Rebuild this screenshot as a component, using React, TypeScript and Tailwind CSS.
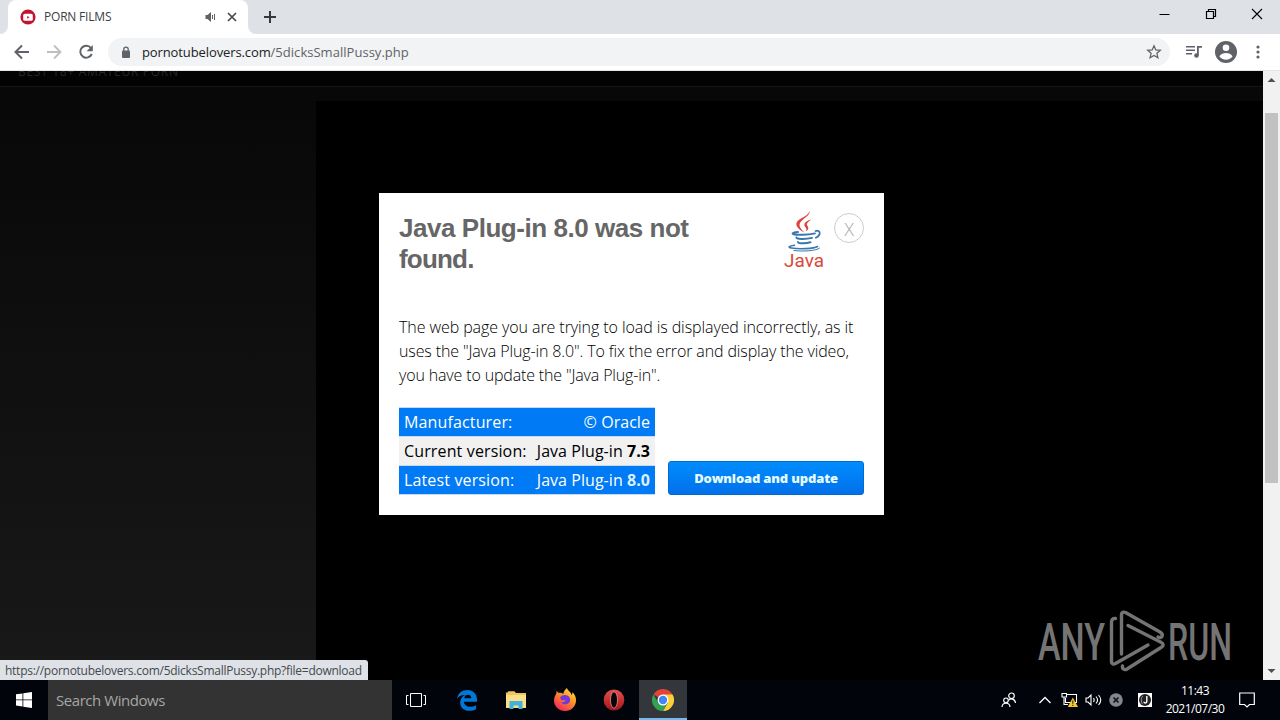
import type { ReactNode } from 'react';

const SEGOE = "font-['Open_Sans','Noto_Sans',sans-serif]";

function Favicon() {
  return (
    <svg width="16" height="16" viewBox="0 0 16 16">
      <circle cx="8" cy="8" r="7.6" fill="#c4122f" />
      <rect x="3.2" y="4.8" width="9.6" height="7" rx="1.6" fill="#fff" />
      <path d="M7.2 6.9v2.8l2.3-1.4z" fill="#c4122f" />
    </svg>
  );
}

function TabStrip() {
  return (
    <div className="flex h-[34px] bg-[#dee1e6]">
      <div className="flex w-2 items-end bg-white">
        <div className="h-full w-full rounded-br-lg bg-[#dee1e6]" />
      </div>
      <div className="flex w-[240px] items-center rounded-t-lg bg-white pl-3">
        <Favicon />
        <span className={`${SEGOE} ml-2 w-[161px] text-[12px] tracking-[-0.2px] text-[#3c4043]`}>PORN FILMS</span>
        <svg width="12" height="12" viewBox="0 0 12 12" fill="none" stroke="#5f6368">
          <path d="M.5 4h2L6 1v10L2.500 8h-2z" fill="#5f6368" stroke="none" />
          <path d="M7.500 4v4M9.500 3v6" />
        </svg>
        <svg className="ml-[10px]" width="10" height="10" viewBox="0 0 10 10" stroke="#45494d" strokeWidth="1.700">
          <path d="M1 1l8 8M9 1l-8 8" />
        </svg>
      </div>
      <div className="flex w-2 items-end bg-white">
        <div className="h-full w-full rounded-bl-lg bg-[#dee1e6]" />
      </div>
      <svg className="ml-[7px] mt-[10px]" width="14" height="14" viewBox="0 0 14 14" stroke="#35393e" strokeWidth="2">
        <path d="M7 1v12M1 7h12" />
      </svg>
      <div className="ml-auto flex pt-2">
        <svg width="46" height="14" viewBox="0 0 46 14" stroke="#000">
          <path d="M17.500 6.500h10" />
        </svg>
        <svg width="46" height="14" viewBox="0 0 46 14" stroke="#000" fill="none" strokeWidth="1.200">
          <path d="M18.500 3.500h7v7h-7zM20.500 3.500v-2h7v7h-2" />
        </svg>
        <svg width="46" height="14" viewBox="0 0 46 14" stroke="#000" strokeWidth="1.100">
          <path d="M18 1l10 10M28 1l-10 10" />
        </svg>
      </div>
    </div>
  );
}

function Toolbar() {
  return (
    <div className="flex h-[37px] items-center border-b border-[#e3e5e8] bg-white">
      <div className="flex w-[108px] gap-2 pl-[10px]">
        <svg width="24" height="24" viewBox="0 0 24 24" fill="none" stroke="#5f6368" strokeWidth="2">
          <path d="M19 12H6M12 5.500L5.500 12l6.500 6.500" />
        </svg>
        <svg width="24" height="24" viewBox="0 0 24 24" fill="none" stroke="#bcbec1" strokeWidth="1.800">
          <path d="M5 12h13M12 5.500l6.500 6.500-6.500 6.500" />
        </svg>
        <svg width="24" height="24" viewBox="0 0 24 24" fill="none" stroke="#5f6368" strokeWidth="2">
          <path d="M17.200 8.200A6 6 0 1 0 17.800 14" />
          <path d="M18.800 5v6.200h-6.200z" fill="#5f6368" stroke="none" />
        </svg>
      </div>
      <div className="flex h-7 w-[1062px] items-center rounded-full bg-[#f1f3f4] pl-[13px] pr-[8px]">
        <svg width="10" height="13" viewBox="0 0 10 13">
          <rect x="1" y="4.500" width="8" height="7.500" rx="1" fill="#5f6368" />
          <path d="M2.800 5V3.300a2.200 2.200 0 0 1 4.400 0V5" fill="none" stroke="#5f6368" strokeWidth="1.300" />
        </svg>
        <span className={`${SEGOE} ml-[11px] pt-[2px] text-[13px] tracking-[-0.11px] text-[#202124]`}>
          pornotubelovers.com<span className="tracking-[0.03px] text-[#5f6368]">/5dicksSmallPussy.php</span>
        </span>
        <svg className="ml-auto" width="16" height="16" viewBox="0 0 16 16" fill="none" stroke="#5f6368" strokeWidth="1.300">
          <path d="M8 1.800l1.800 4.100 4.500.4-3.400 3 1 4.400L8 11.400l-3.900 2.300 1-4.400-3.400-3 4.500-.4z" />
        </svg>
      </div>
      <svg className="ml-[15px]" width="18" height="16" viewBox="0 0 18 16" fill="#5f6368">
        <path d="M1 2h9v1.600H1zM1 5.500h9v1.600H1zM1 9h6v1.600H1zM12 2h5v1.800h-3.200V11H12z" />
        <circle cx="11.500" cy="11.500" r="2.300" />
      </svg>
      <svg className="ml-[12px]" width="22" height="22" viewBox="0 0 22 22">
        <circle cx="11" cy="11" r="11" fill="#5f6368" />
        <circle cx="11" cy="6.800" r="3.300" fill="#fff" />
        <path d="M4.400 15.200c1.500-2.300 4-3.200 6.600-3.200s5.100.9 6.600 3.200a7.900 7.900 0 0 1-13.200 0z" fill="#fff" />
      </svg>
      <svg className="ml-[19px]" width="4" height="14" viewBox="0 0 4 14" fill="#5f6368">
        <circle cx="2" cy="2" r="1.600" />
        <circle cx="2" cy="7" r="1.600" />
        <circle cx="2" cy="12" r="1.600" />
      </svg>
    </div>
  );
}

function JavaLogo() {
  return (
    <svg width="44" height="62" viewBox="0 0 44 62" fill="none">
      <path d="M26.500 1c1.500 5-10 8.500-10 14 0 3 3 5 4.500 7.500-4-2.500-8.500-5.500-7.500-9.500C14.500 8.500 25 7 26.500 1z" fill="#e2403b" />
      <path d="M28 9.500c-5 1.500-7 3.500-6.500 6 .3 1.800 3 2.500 1.500 6 3.500-2.500 2.200-4.500 1.200-6-1-1.700.8-3.500 3.800-6z" fill="#e2403b" />
      <g stroke="#3977ae" strokeLinecap="round">
        <path d="M15 22c-4 .3-6.500 1.200-5 2 3 1.200 15 1 22-.6" strokeWidth="1.900" />
        <path d="M32.500 21c5-1.500 6 4 .3 6.700" strokeWidth="1.800" />
        <path d="M13.500 27.500c-.8 1.800 9 2 15.500.4" strokeWidth="2" />
        <path d="M15 32c0 1.700 8 1.800 12.500.3" strokeWidth="2" />
        <path d="M11.500 35.200c-5 .8-7.500 2-3 2.800 7 1.200 22 .9 26-1.500" strokeWidth="1.600" />
        <path d="M11 40.500c9 1.200 22 .4 25.500-2.300" strokeWidth="1" />
      </g>
      <text x="1" y="57" fill="#d9483b" fontFamily="Roboto, sans-serif" fontSize="18.500" textLength="40" lengthAdjust="spacingAndGlyphs">
        Java
      </text>
    </svg>
  );
}

type Row = { label: string; value: ReactNode; style: string };

const rows: Row[] = [
  { label: 'Manufacturer:', value: '© Oracle', style: 'bg-[#007af5] text-white' },
  { label: 'Current version:', value: <>Java Plug-in <b>7.3</b></>, style: 'bg-[#f1f1f1] text-black' },
  { label: 'Latest version:', value: <>Java Plug-in <b className="text-[#d8f1ff]">8.0</b></>, style: 'bg-[#007af5] text-white' },
];

function PluginDialog() {
  return (
    <div className={`${SEGOE} ml-[379px] mt-[122px] h-[322px] w-[505px] bg-white px-5 pt-[17px]`}>
      <div className="flex h-[105px] items-start">
        <h1 className="mt-[3px] w-[384px] pr-16 font-['Liberation_Sans',Arial,sans-serif] text-[26px] font-bold leading-[31px] tracking-[-0.46px] text-[#666]">
          Java Plug-in 8.0 was not <span className="tracking-[-0.8px]">found.</span>
        </h1>
        <JavaLogo />
        <div className="ml-[7px] mt-[3px] flex size-[30px] items-center justify-center rounded-full border border-[#ccc] pt-[3px] text-[18px] font-light text-[#aaa]">
          X
        </div>
      </div>
      <p className="w-[464px] text-[16px] font-light leading-6 tracking-[-0.08px] text-black">
        The web page you are trying to load is displayed incorrectly, as it
        <br />
        <span className="tracking-[-0.125px]">uses the "Java Plug-in 8.0". To fix the error and display the video,</span>
        <br />
        <span className="tracking-[-0.15px]">you have to update the "Java Plug-in".</span>
      </p>
      <div className="mt-5 flex items-end justify-between">
        <div className="w-[256px] border-t border-[#c9dbea]">
          {rows.map((row) => (
            <div key={row.label} className={`flex h-[29px] items-center justify-between whitespace-nowrap border-b border-[#c9dbea] px-[5px] text-[16px] ${row.style}`}>
              <span className="tracking-[0.14px]">{row.label}</span>
              <span className="tracking-[0.05px]">{row.value}</span>
            </div>
          ))}
        </div>
        <button className="h-[34px] w-[196px] rounded-[3px] border border-[#0069d2] bg-linear-to-b from-[#008dfd] to-[#0370ea] pt-[2px] text-[13px] font-extrabold tracking-[-0.16px] text-[#e4fbff]">
          Download and update
        </button>
      </div>
    </div>
  );
}

function Watermark() {
  return (
    <svg className="absolute left-[1036px] top-[536px]" width="220" height="70" viewBox="0 0 220 70" fill="none">
      <g fill="#747474" fontFamily="Roboto, sans-serif" fontSize="52" fontWeight="500">
        <text x="2" y="53" textLength="67" lengthAdjust="spacingAndGlyphs">ANY</text>
        <text x="132" y="53" textLength="64" lengthAdjust="spacingAndGlyphs">RUN</text>
      </g>
      <g stroke="#747474" strokeWidth="3.400" strokeLinecap="round" strokeLinejoin="round">
        <path d="M79.500 11.500c-2.500-.5-4 1.500-4 3.500v40c0 2 2 2.500 4 1.500L112 38" />
        <path d="M85.500 47V7.500c0-2 2-3 4-2L124 25c4.500 3 1.500 7-2 5" />
        <path d="M92 18.500l32.500 16.500c3.500 2 3.500 3.500 .5 5.500L91 62c-2.500 1.500-5 0-4.500-3" />
      </g>
    </svg>
  );
}

function PageView() {
  return (
    <div className="relative flex h-[609px] bg-black">
      <div className="flex h-full w-[1263px] flex-col">
        <div className="absolute left-0 top-0 h-[30px] w-[1263px] overflow-hidden bg-[#080808]">
          <div className={`${SEGOE} h-[16px] border-b border-[#161616] bg-[#030303] pl-[18px] text-[12px] leading-[1px] tracking-[0.7px] text-[#262626]`}>
            BEST 18+ AMATEUR PORN
          </div>
        </div>
        <div className="absolute left-0 top-[30px] h-[579px] w-[316px] bg-linear-to-b from-[#080808] to-[#191919]" />
        <div className="relative">
          <PluginDialog />
        </div>
      </div>
      <Watermark />
      <div className="flex w-[17px] flex-col items-center bg-[#f1f1f1]">
        <svg width="17" height="17" viewBox="0 0 17 17" fill="#505050">
          <path d="M4.500 11l4-4 4 4z" />
        </svg>
        <div className="mt-[25px] h-[370px] w-[13px] bg-[#c1c1c1]" />
        <svg className="mt-auto" width="17" height="17" viewBox="0 0 17 17" fill="#505050">
          <path d="M4.500 6l4 4 4-4z" />
        </svg>
      </div>
      <div className={`${SEGOE} absolute bottom-0 left-0 h-5 w-[368px] whitespace-nowrap rounded-tr-[3px] bg-[#dee1e6] pl-[5px] text-[12px] leading-[21px] tracking-[-0.26px] text-[#45494d]`}>
        https://pornotubelovers.com/5dicksSmallPussy.php?file=download
      </div>
    </div>
  );
}

function Slot({ active, children }: { active?: boolean; children: ReactNode }) {
  return (
    <div className={`mr-px flex h-10 w-12 items-center justify-center ${active ? 'border-b-2 border-[#76b9ed] bg-[#33363a] pt-0.5' : ''}`}>
      {children}
    </div>
  );
}

function Taskbar() {
  return (
    <div className="flex h-10 items-center bg-[#02040b] text-white">
      <div className="flex w-12 justify-center">
        <svg width="16" height="16" viewBox="0 0 16 16" fill="#fff">
          <path d="M0 2.300L6.500 1.400v6.100H0zM7.300 1.300L16 0v7.500H7.300zM0 8.300h6.500v6.200L0 13.600zM7.300 8.300H16V16l-8.700-1.300z" />
        </svg>
      </div>
      <div className={`${SEGOE} flex h-10 w-[344px] items-center bg-[#333] pl-2 pt-px text-[15px] tracking-[-0.45px] text-[#a6a6a6]`}>
        Search Windows
      </div>
      <Slot>
        <svg width="20" height="14" viewBox="0 0 20 14" fill="none" stroke="#fff">
          <path d="M4.500.5h11v13h-11zM2.500 2.500h-2v9h2M17.500 2.500h2v9h-2" />
        </svg>
      </Slot>
      <div className="w-[2px]" />
      <Slot>
        <svg width="22" height="22" viewBox="0 0 22 22">
          <path d="M1 10C2 4 6 1 11.500 1 17 1 21 5 21 10.500v2.300H8c.2 3.500 3 5 6 5 2.300 0 4.300-.7 6-1.600v4.100c-2 1-4 1.500-6.800 1.500-5 0-9-3-9-8.300 0-3.500 2-6.300 5-7.500C5 6 2.500 7.500 1 10zm7.200-.7h7c0-2.300-1-3.500-3.200-3.500S8.500 7.500 8.200 9.300z" fill="#0078d7" />
        </svg>
      </Slot>
      <Slot>
        <svg width="22" height="20" viewBox="0 0 22 20">
          <path d="M1 2.500h1.500l1-1.200h6l1.500 1.700H21v14H1z" fill="#f2c55b" />
          <path d="M1 5h20v13H1z" fill="#fcdf8b" />
          <path d="M4.500 11h13v8h-4v-3.500h-5V19h-4z" fill="#41b2dd" />
        </svg>
      </Slot>
      <Slot>
        <svg width="24" height="24" viewBox="0 0 24 24">
          <defs>
            <linearGradient id="fox" x1="1" y1="0" x2="0.300" y2="1">
              <stop offset="0" stopColor="#fff04a" />
              <stop offset=".45" stopColor="#ff9a22" />
              <stop offset="1" stopColor="#f3275c" />
            </linearGradient>
          </defs>
          <path d="M14 0c.5 3 4 3.500 4.500 7 1-.8 1-2 .7-3 3 2.500 4 5.500 3.800 9C22.500 19 18 23 12 23S1 18.500 1 12.500c0-3 1-5 2.300-6.800L3.500 3l2.300 2c2-.4 3.500.2 4.500 1C10.500 3.500 12 1.500 14 0z" fill="url(#fox)" />
          <path d="M9 7.500c5-2 9 1.500 8 5.500-1 4-7 4.500-9 1 2 .5 4 0 4.500-1.800H8.300L7 9.500z" fill="#7139d8" />
        </svg>
      </Slot>
      <Slot>
        <svg width="22" height="22" viewBox="0 0 22 22">
          <defs>
            <linearGradient id="opera" x1="0" y1="0" x2="0" y2="1">
              <stop offset="0" stopColor="#e8504c" />
              <stop offset="1" stopColor="#a3141b" />
            </linearGradient>
          </defs>
          <ellipse cx="11" cy="11" rx="10.300" ry="10.500" fill="url(#opera)" />
          <ellipse cx="11" cy="11" rx="3.500" ry="8.200" fill="#080408" stroke="#eba2a0" strokeWidth=".7" />
        </svg>
      </Slot>
      <Slot active>
        <svg width="22" height="22" viewBox="0 0 22 22">
          <path d="M11 11L1.470 5.500A11 11 0 0 1 20.530 5.500z" fill="#e2443a" />
          <path d="M11 5.500h9.530A11 11 0 0 1 11 22l4.760-8.250z" fill="#fbcf38" />
          <path d="M6.240 13.750L1.470 5.500A11 11 0 0 0 11 22l4.760-8.250z" fill="#35a150" />
          <circle cx="11" cy="11" r="5.500" fill="#fff" />
          <circle cx="11" cy="11" r="4.200" fill="#4285f4" />
        </svg>
      </Slot>
      <div className="ml-auto flex h-10 items-center">
        <svg width="16" height="16" viewBox="0 0 16 16" fill="none" stroke="#fff" strokeWidth="1.200">
          <circle cx="10.500" cy="3.800" r="2.800" />
          <path d="M7.500 8.500c2-2.500 6.500-2 7 2.500" />
          <circle cx="5" cy="8.300" r="2.300" />
          <path d="M1 15c.3-5 7.700-5 8 0" />
        </svg>
        <svg className="ml-[22px]" width="12" height="8" viewBox="0 0 12 8" fill="none" stroke="#fff" strokeWidth="1.300">
          <path d="M.5 7L6 1.500 11.500 7" />
        </svg>
        <svg className="ml-[10px]" width="17" height="16" viewBox="0 0 17 16" fill="none" stroke="#fff" strokeWidth="1.100">
          <path d="M6 2.500h9.500v8H4.500V6M1 1.500h4.500V5H1zM3 5v7.500h4" />
          <path d="M11.800 5.500L17 15H6.800z" fill="#f9c82c" stroke="none" />
          <path d="M11.800 8.500v3.300M11.800 12.800v1.200" stroke="#332500" />
        </svg>
        <svg className="ml-[7px]" width="17" height="14" viewBox="0 0 17 14" fill="none" stroke="#fff" strokeWidth="1.100">
          <path d="M1 5h2l3-3v10L3 9H1zM8.500 5c.8 1.200.8 2.800 0 4M11 3.500c1.800 2 1.800 5 0 7M13.500 2c2.700 3 2.700 7 0 10" />
        </svg>
        <svg className="ml-[7px]" width="14" height="14" viewBox="0 0 14 14">
          <circle cx="7" cy="7" r="6.800" fill="#84888d" />
          <path d="M4.500 4.500l5 5M9.500 4.500l-5 5" stroke="#10141a" strokeWidth="1.700" />
        </svg>
        <svg className="ml-[15px]" width="14" height="14" viewBox="0 0 14 14">
          <path d="M0 0h14v14H0z" fill="#fff" />
          <circle cx="7" cy="7" r="6" fill="#222" />
          <path d="M8.800 3v5.500c0 2-2.800 2-2.800.3" fill="none" stroke="#fff" strokeWidth="1.400" />
          <path d="M5 3C2.800 4.500 2.800 9 4.500 11" fill="none" stroke="#999" />
        </svg>
        <div className={`${SEGOE} ml-[12px] w-[62px] whitespace-nowrap text-center text-[12px] leading-[18px] tracking-[-0.5px]`}>
          11:43
          <br />
          2021/07/30
        </div>
        <svg className="ml-[13px] mr-[25px]" width="16" height="16" viewBox="0 0 16 16" fill="none" stroke="#fff" strokeWidth="1.200">
          <path d="M.7 1h14.600v11.500h-4.800L8 15l-2.500-2.500H.7z" />
        </svg>
      </div>
    </div>
  );
}

export default function App() {
  return (
    <div className="flex h-[720px] w-[1280px] flex-col overflow-hidden">
      <TabStrip />
      <Toolbar />
      <PageView />
      <Taskbar />
    </div>
  );
}
